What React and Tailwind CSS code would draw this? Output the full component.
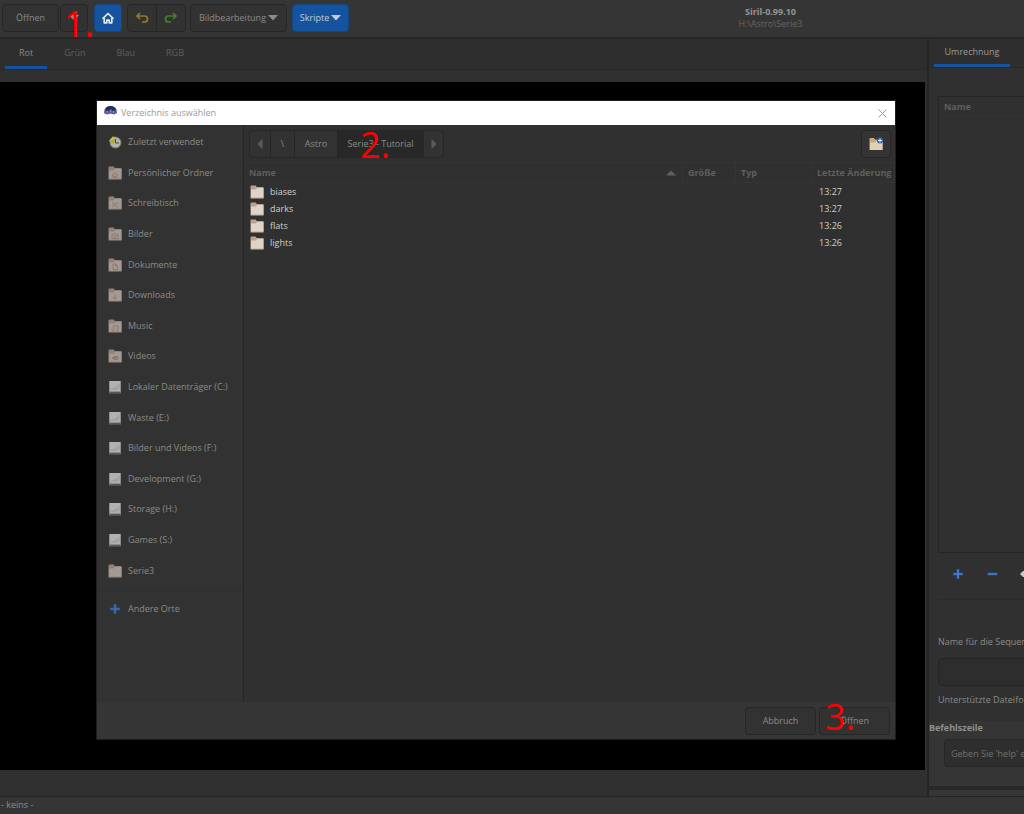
import { useState } from 'react'

const places = [
    { name: 'Zuletzt verwendet', icon: 'recent' },
    { name: 'Persönlicher Ordner', icon: 'home' },
    { name: 'Schreibtisch', icon: 'desktop' },
    { name: 'Bilder', icon: 'camera' },
    { name: 'Dokumente', icon: 'document' },
    { name: 'Downloads', icon: 'download' },
    { name: 'Music', icon: 'music' },
    { name: 'Videos', icon: 'video' },
    { name: 'Lokaler Datenträger (C:)', icon: 'drive' },
    { name: 'Waste (E:)', icon: 'drive' },
    { name: 'Bilder und Videos (F:)', icon: 'drive' },
    { name: 'Development (G:)', icon: 'drive' },
    { name: 'Storage (H:)', icon: 'drive' },
    { name: 'Games (S:)', icon: 'drive' },
    { name: 'Serie3', icon: 'folder' },
]

const files = [
    { name: 'biases', changed: '13:27' },
    { name: 'darks', changed: '13:27' },
    { name: 'flats', changed: '13:26' },
    { name: 'lights', changed: '13:26' },
]

const channels = ['Rot', 'Grün', 'Blau', 'RGB']

// small glyph drawn on the front of a sidebar folder
const emblems = {
    home: <path d="M4 9 7 6.500l3 2.500M5 8.500v3h1.500V10h1v1.500H9v-3" />,
    desktop: <path d="M4 6.500h1M9 6.500h1M4 11h1M9 11h1M5.500 8.700a1.500 1.500 0 1 0 3 0a1.500 1.500 0 1 0-3 0M4 8.700h.5M10 8.700h.5" />,
    camera: <path d="M4 7.500h1.500l.5-1h2l.5 1H10v4H4zM6 9.500a1 1 0 1 0 2 0a1 1 0 1 0-2 0" />,
    document: <path d="M5 6h2.500L9.500 8v3.500H5zM7.500 6v2h2" />,
    download: <path d="M7 6.500V11M5 9l2 2 2-2" />,
    music: <path d="M5.500 10.500V7h4.500v3M4 10.500a.8.800 0 1 0 1.500 0M8.500 10.200a.8.800 0 1 0 1.500 0" />,
    video: <path d="M6 7.500h4v3H6zM4 9l2-1v2zM6.500 8.500h3M6.500 9.500h3" />,
}

function Folder({ emblem, bright }) {
    return (
        <svg width="14" height="14" viewBox="0 0 14 14" fill="none" className="shrink-0">
            <path d="M.5 1.500Q.5.5 1.500.5h4Q6.500.5 6.500 2H13.500V13.500H.5z" fill={bright ? '#b9a28f' : '#90827a'} />
            <path d="M1 4.500h5l1-1.500h6.500v10H1z" fill={bright ? '#e0d4c8' : '#a59a91'} />
            <path d="M1 13.200h12.500" stroke={bright ? '#8f7c6c' : '#75695f'} strokeWidth=".7" />
            <g stroke="#83756b" strokeWidth=".8">{emblems[emblem]}</g>
        </svg>
    )
}

function Drive() {
    return (
        <svg width="14" height="14" viewBox="0 0 14 14" className="shrink-0">
            <path d="M1 1h12v12.500H1z" fill="#6d6d70" />
            <path d="M1.500 1h11v10.500h-11z" fill="#b1b1af" />
            <path d="M2.500 8.500C6 8.500 9 6 11.500 3v5.500L8 10H2.500z" fill="#a3a3a1" />
            <path d="M2 12.500h10" stroke="#56565e" />
        </svg>
    )
}

function Recent() {
    return (
        <svg width="14" height="14" viewBox="0 0 14 14" fill="none" className="shrink-0">
            <circle cx="7.500" cy="7.500" r="5.500" fill="#b5b5ae" stroke="#77776c" />
            <path d="M7.500 4v4H11" stroke="#4d4d48" />
            <path d="M1 6 4.500 1.500 7 2v5L5 9z" fill="#b9a83c" />
            <path d="M2 5.500Q4 2.500 6.500 3" stroke="#ded272" />
        </svg>
    )
}

function PlaceIcon({ icon }) {
    if (icon === 'recent') return <Recent />
    if (icon === 'drive') return <Drive />
    return <Folder emblem={icon} />
}

function Plus({ color = '#4b84cc' }) {
    return (
        <svg width="12" height="12" viewBox="0 0 12 12" fill="none" className="shrink-0">
            <path d="M6 1v10M1 6h10" stroke="#234f91" strokeWidth="3" />
            <path d="M6 1.500v9M1.500 6h9" stroke={color} strokeWidth="1.600" />
        </svg>
    )
}

function Triangle({ dir = 'down', className = '' }) {
    const paths = {
        down: 'M0 2h10L5 7.500z',
        up: 'M0 7.500h10L5 2.500z',
        left: 'M7.500 0v10L2.500 5z',
        right: 'M2.500 0v10l5-5z',
    }
    return (
        <svg width="10" height="10" viewBox="0 0 10 10" className={`shrink-0 ${className}`}>
            <path d={paths[dir]} fill="currentColor" />
        </svg>
    )
}

function Step({ children, className }) {
    return (
        <span className={`pointer-events-none absolute z-10 text-4xl leading-9 text-[#ff0000] ${className}`}>{children}</span>
    )
}

function Toolbar() {
    const btn = 'flex h-7 items-center justify-center rounded border border-[#262626] bg-[#323232]'
    return (
        <header className="flex items-start border-b-2 border-[#272727] bg-[#353535] pt-1 pb-[5px] pl-0.5">
            <button type="button" className={`${btn} w-[57px]`}>Öffnen</button>
            <div className="relative ml-px">
                <button type="button" aria-label="Zuletzt geöffnet" className={`${btn} w-7`}><Triangle /></button>
                <Step className="top-0.5 left-1">1.</Step>
            </div>
            <button type="button" aria-label="Arbeitsverzeichnis" className="ml-1.5 flex h-7 w-7 items-center justify-center rounded border border-[#124685] bg-[#15539e]">
                <svg width="14" height="14" viewBox="0 0 14 14" fill="none" stroke="#e8e8e4" strokeWidth="1.700" strokeLinejoin="round" strokeLinecap="round">
                    <path d="M2 7.300 7 2.500l5 4.800" />
                    <path d="M3.200 7.500v4.300h2.600V9.200h2.400v2.600h2.600V7.500" />
                </svg>
            </button>
            <div className="ml-[5px] flex">
                <button type="button" aria-label="Rückgängig" className={`${btn} w-[30px] rounded-r-none`}>
                    <svg width="14" height="12" viewBox="0 0 14 12" fill="none" stroke="#8f7b2c" strokeWidth="1.700">
                        <path d="M5 1 2 4l3 3M2 4h7.500a3 3 0 0 1 0 6H7" />
                    </svg>
                </button>
                <button type="button" aria-label="Wiederholen" className={`${btn} w-[29px] rounded-l-none border-l-0`}>
                    <svg width="14" height="12" viewBox="0 0 14 12" fill="none" stroke="#43802c" strokeWidth="1.700">
                        <path d="m9 1 3 3-3 3M12 4H4.500a3 3 0 0 0 0 6H7" />
                    </svg>
                </button>
            </div>
            <button type="button" className={`${btn} ml-1 w-[97px] gap-0.5`}>Bildbearbeitung<Triangle /></button>
            <button type="button" className="ml-[5px] flex h-7 w-[57px] items-center justify-center gap-0.5 rounded border border-[#124685] bg-[#15539e] text-[#c3cbd6]">Skripte<Triangle /></button>
            <div className="flex-1 pt-0.5 pl-[168px] text-center leading-3">
                <h1 className="font-bold text-[#969693]">Siril-0.99.10</h1>
                <p className="text-[#656563]">H:\Astro\Serie3</p>
            </div>
        </header>
    )
}

function FileDialog() {
    const [selected, setSelected] = useState('')
    const crumb = 'flex items-center justify-center border-r border-[#262626]'
    const th = 'border-y border-r border-[#353535] p-0 text-left font-bold'
    const action = 'h-7 w-[71px] rounded border border-[#262626] bg-[#323232]'

    return (
        <section role="dialog" aria-label="Verzeichnis auswählen" className="flex min-w-0 flex-1 flex-col border border-[#1e1e1e] bg-[#303030]">
            <div className="flex h-6 items-center bg-white pr-2 pl-[7px] text-[#9a9a9a]">
                <svg width="13" height="14" viewBox="0 0 13 14" className="mr-1 mb-1">
                    <path d="M0 9Q0 2 6.500 2T13 9L10 10.500 6.500 9.500 3 10.500z" fill="#5c55a4" />
                    <path d="M1 6Q2.500 2 6.500 2T12 6L9 7 7 5 5 7z" fill="#173654" />
                    <path d="M3 8h1M6 7h1M9 8h1" stroke="#c9c6e8" />
                    <path d="M4 13.500h1M8 13.500h1" stroke="#ddd" />
                </svg>
                <h2 className="flex-1">Verzeichnis auswählen</h2>
                <button type="button" aria-label="Schließen">
                    <svg width="9" height="9" viewBox="0 0 9 9" stroke="#999" strokeWidth="1"><path d="m.5.5 8 8M8.500.5l-8 8" /></svg>
                </button>
            </div>

            <div className="flex flex-1">
                <nav className="w-[147px] shrink-0 border-r border-[#262626] bg-[#323232] pt-0.5">
                    <ul className="flex h-[459px] flex-col">
                        {places.map((place) => (
                            <li key={place.name} className="flex flex-1">
                                <button type="button" className="flex w-full items-center gap-1.5 pl-[11px]">
                                    <PlaceIcon icon={place.icon} />
                                    {place.name}
                                </button>
                            </li>
                        ))}
                    </ul>
                    <button type="button" className="mt-1 flex h-9 w-full items-center gap-[7px] border-t border-[#2d2d2d] pl-3">
                        <Plus color="#416da5" />Andere Orte
                    </button>
                </nav>

                <div className="min-w-0 flex-1">
                    <div className="flex justify-between pt-[5px] pr-1 pb-1 pl-[5px]">
                        <div className="relative flex h-7 rounded border border-[#262626] bg-[#323232]">
                            <button type="button" aria-label="Zurück" className={`${crumb} w-[21px] text-[#5a5a58]`}><Triangle dir="left" /></button>
                            <button type="button" className={`${crumb} w-6`}>\</button>
                            <button type="button" className={`${crumb} w-[43px]`}>Astro</button>
                            <button type="button" className={`${crumb} w-[86px] bg-[#282828]`}>Serie3 - Tutorial</button>
                            <button type="button" aria-label="Vor" className="flex w-[19px] items-center justify-center text-[#5a5a58]"><Triangle dir="right" /></button>
                            <Step className="-top-1 left-[110px]">2.</Step>
                        </div>
                        <button type="button" aria-label="Ordner anlegen" className="flex h-7 w-[30px] items-center justify-center rounded border border-[#262626] bg-[#343434]">
                            <svg width="14" height="14" viewBox="0 0 14 14">
                                <path d="M.5 2Q.5 1 1.500 1H5l1 1.500h7.500V13H.5z" fill="#c3ab86" />
                                <path d="M1 5.500h5L7.500 4h6v9H1z" fill="#e3d0b2" />
                                <circle cx="11" cy="3.500" r="3" fill="#2a62b0" />
                                <path d="M11 1.500v4M9 3.500h4" stroke="#e4edf8" />
                            </svg>
                        </button>
                    </div>

                    <table className="w-full table-fixed border-separate border-spacing-0">
                        <thead className="text-[#5f5f5d]">
                            <tr className="h-[21px]">
                                <th className={`${th} pr-1.5 pl-[5px]`}>
                                    <div className="flex items-center justify-between">Name<Triangle dir="up" /></div>
                                </th>
                                <th className={`${th} w-[53px] pl-[5px]`}>Größe</th>
                                <th className={`${th} w-[76px] pl-[5px]`}>Typ</th>
                                <th className={`${th} w-[83px] pl-[5px] whitespace-nowrap`}>Letzte Änderung</th>
                            </tr>
                        </thead>
                        <tbody className="text-[#cfcfcc]">
                            {files.map((file) => (
                                <tr key={file.name} onClick={() => setSelected(file.name)} aria-selected={selected === file.name} className="h-[17px]">
                                    <td className="p-0 pl-1.5">
                                        <div className="flex items-center gap-1.5"><Folder bright />{file.name}</div>
                                    </td>
                                    <td className="p-0" />
                                    <td className="p-0" />
                                    <td className="p-0 pl-[7px]">{file.changed}</td>
                                </tr>
                            ))}
                        </tbody>
                    </table>
                </div>
            </div>

            <div className="flex justify-end gap-[3px] bg-[#353535] pt-[5px] pr-[5px] pb-1">
                <button type="button" className={action}>Abbruch</button>
                <div className="relative">
                    <button type="button" className={action}>Öffnen</button>
                    <Step className="-top-2 left-1.5">3.</Step>
                </div>
            </div>
        </section>
    )
}

function Sidebar() {
    return (
        <aside className="flex w-[97px] shrink-0 flex-col overflow-hidden border-l-2 border-[#252525] bg-[#303030] whitespace-nowrap">
            <div className="flex border-b border-[#282828] bg-[#2e2e2e] pl-[5px]">
                <button type="button" className="h-7 w-[76px] shrink-0 border-b-3 border-[#15539e] text-[#9a9a97]">Umrechnung</button>
            </div>
            <div className="mt-7 ml-[9px] flex-1 border border-r-0 border-[#252525]">
                <div className="h-5 border-b border-[#343434] pl-[5px] leading-5 font-bold text-[#5f5f5d]">Name</div>
            </div>
            <div className="ml-[9px] flex h-[47px] items-center gap-[22px] border-b border-[#2b2b2b] pb-1 pl-3.5">
                <button type="button" aria-label="Hinzufügen"><Plus /></button>
                <button type="button" aria-label="Entfernen">
                    <svg width="12" height="12" viewBox="0 0 12 12"><path d="M1.500 6h10" stroke="#234f91" strokeWidth="3" /><path d="M2 6h9" stroke="#4b84cc" strokeWidth="1.400" /></svg>
                </button>
                <button type="button" aria-label="Leeren">
                    <svg width="12" height="12" viewBox="0 0 12 12"><path d="m0 6 3-3h6l3 3-3 3H3z" fill="#c9c9c2" /></svg>
                </button>
            </div>
            <div className="pt-[34px] pb-[13px] pl-[9px]">
                <label htmlFor="sequence" className="block h-4 leading-4">Name für die Sequenz:</label>
                <input id="sequence" className="mt-2 block h-7 w-48 rounded border border-[#262626] bg-[#2d2d2d] px-2" />
                <p className="mt-1.5 h-4 leading-4">Unterstützte Dateiformate</p>
            </div>
            <div className="bg-[#353535] pb-[19px]">
                <label htmlFor="command" className="block h-[18px] leading-3.5 font-bold text-[#8f8f8c]">Befehlszeile</label>
                <input id="command" placeholder="Geben Sie 'help' ein" className="ml-[15px] block h-7 w-48 rounded border border-[#262626] bg-[#2e2e2e] px-1.5 placeholder:text-[#71716e]" />
            </div>
            <div className="h-1 bg-[#282828]" />
            <div className="h-1.5 bg-[#353535]" />
        </aside>
    )
}

function App() {
    const [channel, setChannel] = useState('Rot')

    return (
        <div className="flex min-h-screen flex-col bg-[#303030] font-['Open_Sans',sans-serif] text-[9px] leading-3 text-[#8b8b88]">
            <Toolbar />
            <div className="flex flex-1">
                <main className="flex min-w-0 flex-1 flex-col">
                    <div className="flex gap-[3px] border-b border-[#282828] bg-[#2e2e2e] pl-[5px]">
                        {channels.map((name) => (
                            <button
                                key={name}
                                type="button"
                                onClick={() => setChannel(name)}
                                className={`h-[30px] border-b-3 px-3.5 ${channel === name ? 'border-[#15539e]' : 'border-transparent text-[#5f5f5d]'}`}
                            >
                                {name}
                            </button>
                        ))}
                    </div>
                    <div className="mt-3 mr-0.5 mb-[26px] flex flex-1 bg-black pt-[18px] pr-[29px] pb-[30px] pl-24">
                        <FileDialog />
                    </div>
                </main>
                <Sidebar />
            </div>
            <footer className="h-[18px] border-t border-[#252525] bg-[#353535] pl-px leading-4">- keins -</footer>
        </div>
    )
}

export default App
